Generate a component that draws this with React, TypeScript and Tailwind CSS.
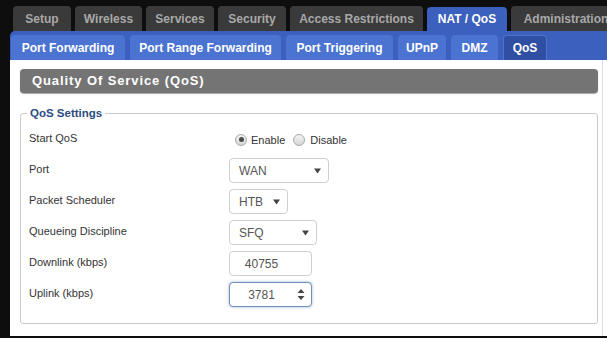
import React from "react";

const topTabs = [
  { label: "Setup", w: "w-[58px]" },
  { label: "Wireless", w: "w-[67px]" },
  { label: "Services", w: "w-[68px]" },
  { label: "Security", w: "w-[68px]" },
  { label: "Access Restrictions", w: "w-[133px]" },
  { label: "NAT / QoS", w: "w-[80px]", active: true },
  { label: "Administration", w: "w-[110px]" },
];

const subTabs = [
  { label: "Port Forwarding", w: "w-[114px]" },
  { label: "Port Range Forwarding", w: "w-[151px]" },
  { label: "Port Triggering", w: "w-[107px]" },
  { label: "UPnP", w: "w-[48px]" },
  { label: "DMZ", w: "w-[47px]" },
  { label: "QoS", w: "w-[44px]", active: true },
];

function Radio({ checked }: { checked?: boolean }) {
  return (
    <span className="flex h-[12px] w-[12px] items-center justify-center rounded-full border border-[#a8a8a8] bg-gradient-to-b from-[#f4f4f4] to-[#d6d6d6]">
      {checked && <span className="h-[5px] w-[5px] rounded-full bg-[#4a4a4a]" />}
    </span>
  );
}

function Select({ value, w }: { value: string; w: string }) {
  return (
    <div
      className={`${w} flex h-[25px] items-center justify-between rounded-[4px] border border-[#cfcfcf] bg-white pl-[9px] pr-[7px] text-[12px] text-[#555]`}
    >
      <span>{value}</span>
      <svg width="7" height="6" viewBox="0 0 7 6">
        <path d="M0 0.5 L7 0.5 L3.5 5.5 Z" fill="#444" />
      </svg>
    </div>
  );
}

function NumberInput({ value, focused }: { value: string; focused?: boolean }) {
  return (
    <div
      className={`flex h-[25px] w-[83px] items-center rounded-[4px] border bg-white text-[12px] text-[#555] ${
        focused
          ? "border-[#7391bb] shadow-[0_0_3px_rgba(70,110,170,0.55)]"
          : "border-[#cfcfcf]"
      }`}
    >
      <span className="flex-1 pl-[2px] text-center">{value}</span>
      <span className="flex w-[20px] justify-center">
        {focused && (
          <svg width="8" height="13" viewBox="0 0 8 13">
            <path d="M0.5 5 L4 1 L7.5 5 Z" fill="#444" />
            <path d="M0.5 8 L4 12 L7.5 8 Z" fill="#444" />
          </svg>
        )}
      </span>
    </div>
  );
}

function Row({ label, children }: { label: string; children: React.ReactNode }) {
  return (
    <div className="flex h-[31px] items-center">
      <div className="w-[200px] pb-[3px] text-[11px] text-[#333]">{label}</div>
      {children}
    </div>
  );
}

export default function App() {
  return (
    <div
      className="flex h-[338px] w-[607px] flex-col overflow-hidden bg-[#0e0e0e]"
      style={{ fontFamily: '"Liberation Sans", Arial, sans-serif' }}
    >
      {/* main menu */}
      <div className="flex h-[31px] items-end gap-[4px] pl-[13px]">
        {topTabs.map((t) => (
          <div
            key={t.label}
            className={`${t.w} flex shrink-0 items-center justify-center rounded-t-[4px] text-[12px] font-bold ${
              t.active
                ? "h-[24px] bg-[#3b60bd] text-white"
                : "h-[25px] bg-[#3a3a3a] text-[#a8a8a8]"
            }`}
          >
            {t.label}
          </div>
        ))}
      </div>

      {/* sub menu */}
      <div className="ml-[10px] flex h-[29px] items-end gap-[5px] rounded-tl-[5px] bg-[#3b60bd] pl-[1px]">
        {subTabs.map((t) => (
          <div
            key={t.label}
            className={`${t.w} flex h-[25px] shrink-0 items-center justify-center rounded-t-[4px] text-[12px] font-bold text-white ${
              t.active
                ? "border border-b-0 border-[#4f73cc] bg-[#2f4fa3]"
                : "bg-[#4a73d2]"
            }`}
          >
            {t.label}
          </div>
        ))}
      </div>

      {/* content */}
      <div className="ml-[10px] h-[276px] bg-white">
        <div className="h-full w-[593px] border-r border-[#dedede] pl-[10px] pr-[4px] pt-[9px]">
          <div className="flex h-[24px] items-center rounded-[4px] bg-[#747474] pl-[12px] text-[13px] font-bold tracking-[0.9px] text-white shadow-[0_1px_1px_rgba(0,0,0,0.35)]">
            Quality Of Service (QoS)
          </div>

          <fieldset className="mt-[13px] rounded-[3px] border border-[#c9c9c9] pb-[13px] pl-[8px] pt-[4px]">
            <legend className="ml-[-2px] px-[3px] text-[11.5px] font-bold leading-[14px] text-[#2b4c7e]">
              QoS Settings
            </legend>

            <Row label="Start QoS">
              <div className="flex items-center pl-[6px] text-[11px] text-[#333]">
                <Radio checked />
                <span className="ml-[4px] mt-[2px]">Enable</span>
                <span className="ml-[8px]">
                  <Radio />
                </span>
                <span className="ml-[5px] mt-[2px]">Disable</span>
              </div>
            </Row>
            <Row label="Port">
              <Select value="WAN" w="w-[100px]" />
            </Row>
            <Row label="Packet Scheduler">
              <Select value="HTB" w="w-[59px]" />
            </Row>
            <Row label="Queueing Discipline">
              <Select value="SFQ" w="w-[88px]" />
            </Row>
            <Row label="Downlink (kbps)">
              <NumberInput value="40755" />
            </Row>
            <Row label="Uplink (kbps)">
              <NumberInput value="3781" focused />
            </Row>
          </fieldset>
        </div>
      </div>
    </div>
  );
}
